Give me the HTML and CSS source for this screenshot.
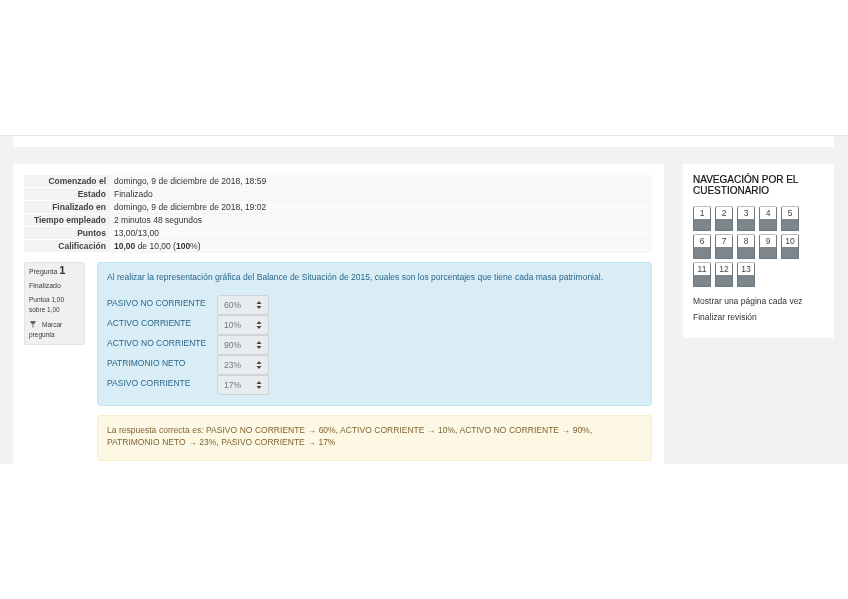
FILE: index.html
```html
<!DOCTYPE html>
<html lang="es">
<head>
<meta charset="utf-8">
<title>Revisión del cuestionario</title>
<link rel="stylesheet" href="styles.css">
</head>
<body>
<header class="top"></header>
<div class="stage">
  <div class="strip"></div>
  <div class="columns">
    <main class="card main">
      <div class="summary">
        <div class="lab">Comenzado el</div><div class="val">domingo, 9 de diciembre de 2018, 18:59</div>
        <div class="lab">Estado</div><div class="val">Finalizado</div>
        <div class="lab">Finalizado en</div><div class="val">domingo, 9 de diciembre de 2018, 19:02</div>
        <div class="lab">Tiempo empleado</div><div class="val">2 minutos 48 segundos</div>
        <div class="lab">Puntos</div><div class="val">13,00/13,00</div>
        <div class="lab">Calificación</div><div class="val"><b>10,00</b> de 10,00 (<b>100</b>%)</div>
      </div>
      <div class="question">
        <aside class="info">
          <div class="qno">Pregunta <b>1</b></div>
          <div class="istate">Finalizado</div>
          <div class="igrade">Puntúa 1,00 sobre 1,00</div>
          <div class="iflag"><svg class="flag" viewBox="0 0 8 8" width="8" height="8"><path d="M1 1h6L5.500 4H4.500v3.500H3.500V4H2.500z" fill="#666"/></svg>Marcar pregunta</div>
        </aside>
        <div class="answers">
          <section class="formulation">
            <p class="qtext">Al realizar la representación gráfica del Balance de Situación de 2015, cuales son los porcentajes que tiene cada masa patrimonial.</p>
            <div class="match">
              <div class="mrow"><span class="mlabel">PASIVO NO CORRIENTE</span><span class="sel">60%<svg class="updown" viewBox="0 0 6 8" width="6" height="8"><path d="M3 0l2.500 3h-5zM3 8L.5 5h5z" fill="#444"/></svg></span></div>
              <div class="mrow"><span class="mlabel">ACTIVO CORRIENTE</span><span class="sel">10%<svg class="updown" viewBox="0 0 6 8" width="6" height="8"><path d="M3 0l2.500 3h-5zM3 8L.5 5h5z" fill="#444"/></svg></span></div>
              <div class="mrow"><span class="mlabel">ACTIVO NO CORRIENTE</span><span class="sel">90%<svg class="updown" viewBox="0 0 6 8" width="6" height="8"><path d="M3 0l2.500 3h-5zM3 8L.5 5h5z" fill="#444"/></svg></span></div>
              <div class="mrow"><span class="mlabel">PATRIMONIO NETO</span><span class="sel">23%<svg class="updown" viewBox="0 0 6 8" width="6" height="8"><path d="M3 0l2.500 3h-5zM3 8L.5 5h5z" fill="#444"/></svg></span></div>
              <div class="mrow"><span class="mlabel">PASIVO CORRIENTE</span><span class="sel">17%<svg class="updown" viewBox="0 0 6 8" width="6" height="8"><path d="M3 0l2.500 3h-5zM3 8L.5 5h5z" fill="#444"/></svg></span></div>
            </div>
          </section>
          <section class="feedback">La respuesta correcta es: PASIVO NO CORRIENTE → 60%, ACTIVO CORRIENTE → 10%, ACTIVO NO CORRIENTE → 90%, PATRIMONIO NETO → 23%, PASIVO CORRIENTE → 17%</section>
        </div>
      </div>
    </main>
    <nav class="card side">
      <h2 class="navtitle">NAVEGACIÓN POR EL CUESTIONARIO</h2>
      <div class="grid">
        <a class="qbtn">1</a><a class="qbtn">2</a><a class="qbtn">3</a><a class="qbtn">4</a><a class="qbtn">5</a>
        <a class="qbtn">6</a><a class="qbtn">7</a><a class="qbtn">8</a><a class="qbtn">9</a><a class="qbtn">10</a>
        <a class="qbtn">11</a><a class="qbtn">12</a><a class="qbtn">13</a>
      </div>
      <p class="navlink first">Mostrar una página cada vez</p>
      <p class="navlink">Finalizar revisión</p>
    </nav>
  </div>
</div>
</body>
</html>
```
FILE: styles.css
```css
* { box-sizing: border-box; }
html, body { margin: 0; padding: 0; background: #fff; }
body {
  font-family: "Liberation Sans", Arial, sans-serif;
  font-size: 8.500px;
  color: #333;
  width: 848px;
  height: 599px;
  overflow: hidden;
}
.top { height: 136px; border-bottom: 1px solid #e6e6e6; background: #fff; }
.stage { height: 328px; background: #f2f2f2; overflow: hidden; padding: 0 14px 0 13px; filter: blur(0.45px); }
.strip { height: 11px; background: #fff; }
.columns { display: flex; align-items: flex-start; justify-content: space-between; margin-top: 17px; }
.card { background: #fff; }
.main { width: 651px; height: 400px; padding: 11px 12px 0 11px; }
.side { width: 151px; height: 174px; padding: 10px 10px; }

.summary { display: grid; grid-template-columns: 86px 1fr; grid-auto-rows: 13px; line-height: 13px; }
.lab { background: #f3f3f3; text-align: right; padding-right: 4px; font-weight: 700; color: #444; border-bottom: 1px solid #fff; }
.val { background: #f9f9f9; padding-left: 4px; border-bottom: 1px solid #f3f3f3; }

.question { display: flex; gap: 12px; margin-top: 9px; align-items: flex-start; }
.info {
  width: 61px; height: 83px; flex: none;
  background: #eef0f1; border: 1px solid #e2e4e5; border-radius: 2px;
  padding: 2px 4px; font-size: 7px; line-height: 10px; color: #3a3a3a;
}
.qno b { font-size: 11px; color: #333; }
.istate { margin-top: 4px; }
.igrade { margin-top: 4px; font-size: 6.500px; }
.iflag { margin-top: 5px; font-size: 6.500px; }
.flag { margin-right: 5px; vertical-align: -1px; }

.answers { width: 556px; }
.formulation {
  height: 144px; background: #d9edf7; border: 1px solid #bce8f1; border-radius: 3px;
  padding: 8px 9px; color: #2a668a;
}
.qtext { margin: 0; line-height: 12px; letter-spacing: 0.01px; }
.match { margin-top: 12px; display: flex; flex-direction: column; }
.mrow { display: flex; height: 20px; }
.mlabel { width: 110px; flex: none; line-height: 12px; color: #2a668a; padding-top: 2px; }
.sel {
  width: 52px; height: 20px; background: #e9ecef; border: 1px solid #ced4da; border-radius: 2px;
  display: flex; align-items: center; justify-content: space-between; padding: 0 6px 0 6px; color: #777; font-size: 8.500px;
}
.feedback {
  margin-top: 9px; height: 46px; background: #fcf8e3; border: 1px solid #faebcc; border-radius: 3px;
  padding: 8px 9px; line-height: 12px; color: #806334; word-spacing: 0.2px;
}

.navtitle { margin: 0 0 10px; font-size: 10px; line-height: 11px; font-weight: 400; color: #111; -webkit-text-stroke: 0.2px #111; }
.grid { display: grid; grid-template-columns: repeat(5, 18px); grid-auto-rows: 25px; column-gap: 4px; row-gap: 3px; }
.qbtn {
  display: block; height: 25px; border: 1px solid #6f7a80; border-top-color: #bbb; border-radius: 2px 2px 0 0;
  background: linear-gradient(#fff 0, #fff 12px, #7d868c 12px, #7d868c 100%);
  font-size: 8.500px; line-height: 12px; text-align: center; color: #444;
}
.navlink { margin: 5px 0 0; line-height: 11px; color: #333; }
.navlink.first { margin-top: 9px; }
```
